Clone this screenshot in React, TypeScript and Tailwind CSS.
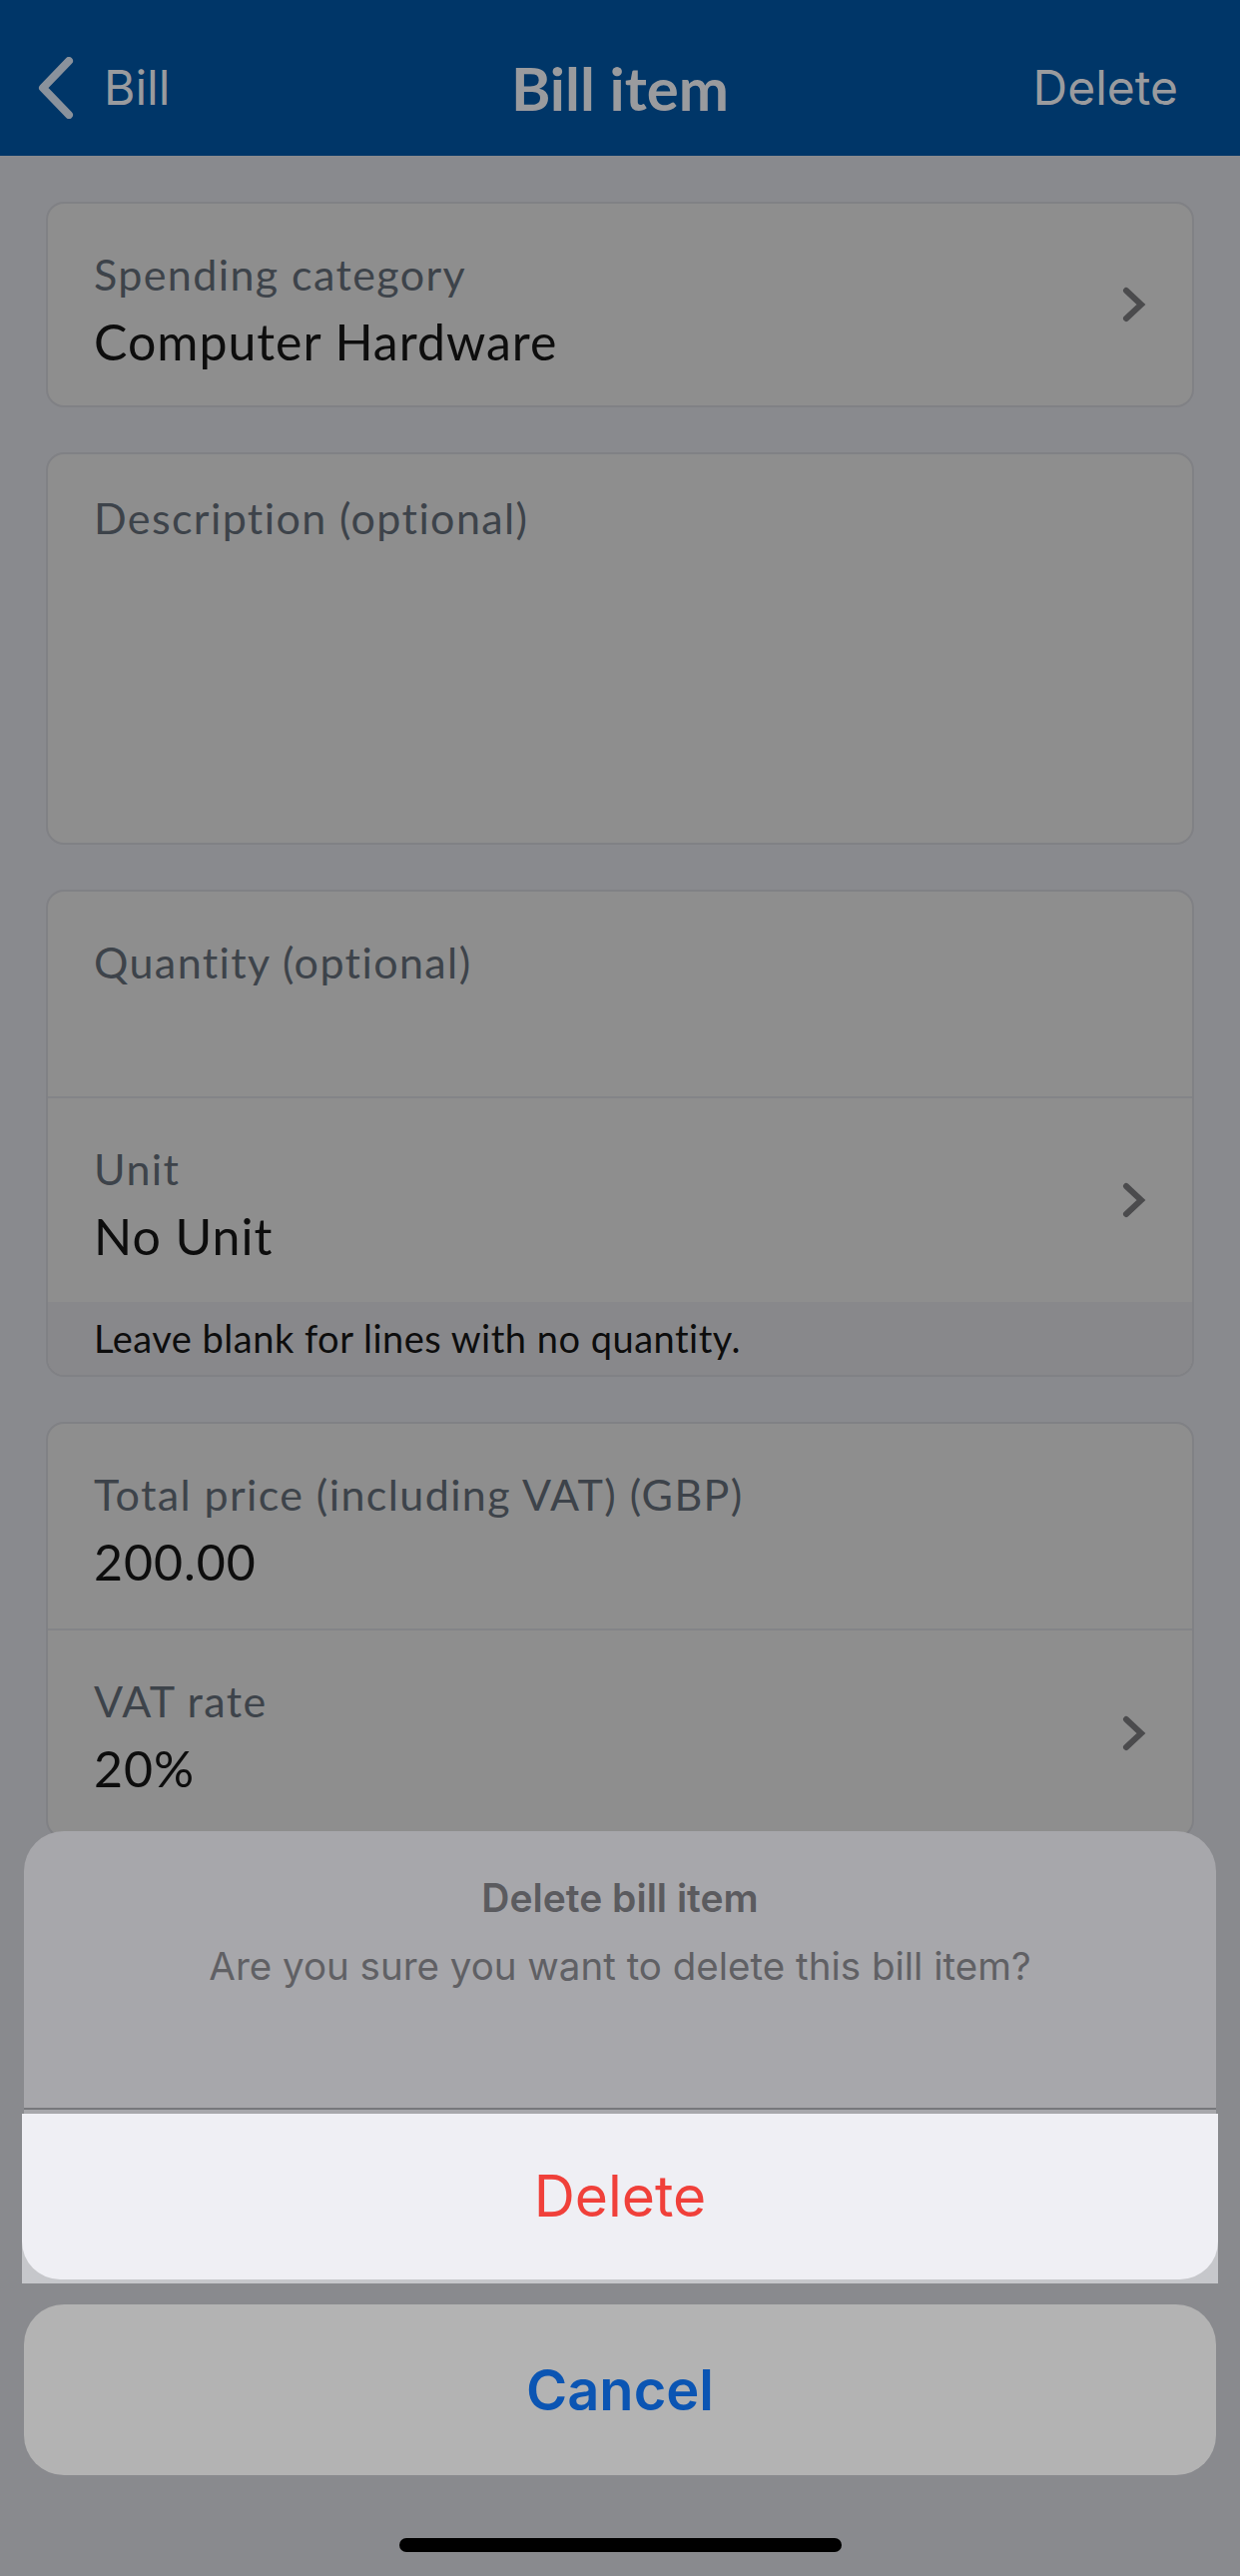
import React from 'react';

const app = "font-['Lato','Noto_Sans',sans-serif]";
const sys = "font-['Inter','Liberation_Sans',sans-serif]";

const Chevron = () => (
  <svg width="24" height="36" viewBox="0 0 24 36" className="shrink-0">
    <polyline points="4,4 19,18 4,32" fill="none" stroke="#4b4b4d" strokeWidth="6" strokeLinecap="round" strokeLinejoin="miter" />
  </svg>
);

const BackChevron = () => (
  <svg width="42" height="62" viewBox="0 0 42 62" className="shrink-0">
    <polyline points="33,4 7,31 33,58" fill="none" stroke="#8a929c" strokeWidth="8" strokeLinecap="round" strokeLinejoin="round" />
  </svg>
);

interface FieldProps {
  label: string;
  value?: string;
  chevron?: boolean;
  h: string;
}

const labelCls = `${app} text-[43px] leading-[50px] tracking-[1.4px] text-[#3d434a]`;

const Field = ({ label, value, chevron, h }: FieldProps) => (
  <div className={`flex items-center pl-[46px] pr-[46px] ${h}`}>
    <div className="flex-1 self-start pt-[46px]">
      <div className={labelCls}>{label}</div>
      {value && (
        <div className={`${app} mt-[14px] text-[50px] leading-[56px] tracking-[1px] text-[#0d0d0d]`}>{value}</div>
      )}
    </div>
    {chevron && <Chevron />}
  </div>
);

const Card = ({ children }: { children: React.ReactNode }) => (
  <div className="overflow-hidden rounded-[18px] border-2 border-[#808185] bg-[#8e8e8e]">{children}</div>
);

const Divider = () => <div className="h-[2px] bg-[#838488]" />;

export default function App() {
  return (
    <div className="relative h-[2580px] w-[1242px] overflow-hidden bg-[#898a8e]">
      {/* nav */}
      <div className="grid h-[156px] grid-cols-[1fr_auto_1fr] items-center bg-[#003668] pt-[20px]">
        <div className="flex items-center pl-[36px]">
          <BackChevron />
          <span className={`${sys} ml-[26px] text-[48px] text-[#9a9b9e]`}>Bill</span>
        </div>
        <div className={`${app} text-[60px] font-bold text-[#9a9b9e]`}>Bill item</div>
        <div className={`${sys} pr-[62px] text-right text-[48px] text-[#9a9b9e]`}>Delete</div>
      </div>

      {/* form */}
      <div className="mx-[46px] mt-[46px] flex flex-col gap-[45px]">
        <Card>
          <Field label="Spending category" value="Computer Hardware" chevron h="h-[202px]" />
        </Card>
        <Card>
          <div className="h-[389px] pl-[46px] pt-[39px]">
            <div className={labelCls}>Description (optional)</div>
          </div>
        </Card>
        <Card>
          <Field label="Quantity (optional)" h="h-[205px]" />
          <Divider />
          <Field label="Unit" value="No Unit" chevron h="h-[204px]" />
          <div className="flex h-[73px] items-center bg-[#88888b] pl-[46px]">
            <span className={`${app} text-[38px] tracking-[0.5px] text-[#0d0d0d]`}>Leave blank for lines with no quantity.</span>
          </div>
        </Card>
        <Card>
          <Field label="Total price (including VAT) (GBP)" value="200.00" h="h-[205px]" />
          <Divider />
          <Field label="VAT rate" value="20%" chevron h="h-[206px]" />
        </Card>
      </div>

      {/* action sheet */}
      <div className="absolute inset-x-0 bottom-0 flex flex-col px-[22px]">
        <div className="mx-[2px] flex h-[283px] flex-col items-center rounded-t-[40px] bg-[#a7a7ab]">
          <div className={`${sys} mt-[38px] text-[39px] font-semibold text-[#5b5b5f]`}>Delete bill item</div>
          <div className={`${sys} mt-[10px] text-[38.5px] text-[#606064]`}>Are you sure you want to delete this bill item?</div>
          <div className="mb-[4px] mt-auto h-[2px] w-full bg-[#77787c]" />
        </div>
        <div className="h-[170px] bg-[#c6c7cb]">
          <div className="flex h-[166px] items-center justify-center rounded-b-[38px] bg-[#efeff4]">
            <span className={`${sys} text-[57px] text-[#f0403a]`}>Delete</span>
          </div>
        </div>
        <div className="mx-[2px] mt-[21px] flex h-[171px] items-center justify-center rounded-[40px] bg-[#b3b3b3]">
          <span className={`${sys} text-[56px] font-semibold text-[#0b55b3]`}>Cancel</span>
        </div>
        <div className="mx-auto mb-[24px] mt-[63px] h-[14px] w-[443px] rounded-full bg-black" />
      </div>
    </div>
  );
}
